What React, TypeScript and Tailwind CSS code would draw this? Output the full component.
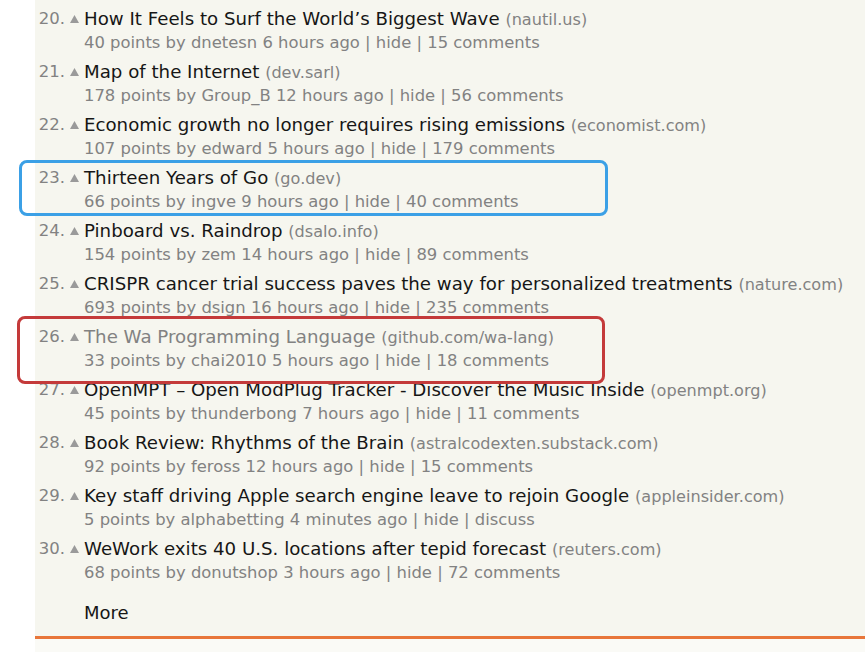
import React from "react";

const STORIES = [
  { rank: 20, title: "How It Feels to Surf the World’s Biggest Wave", site: "nautil.us", points: 40, user: "dnetesn", age: "6 hours ago", comments: "15 comments" },
  { rank: 21, title: "Map of the Internet", site: "dev.sarl", points: 178, user: "Group_B", age: "12 hours ago", comments: "56 comments" },
  { rank: 22, title: "Economic growth no longer requires rising emissions", site: "economist.com", points: 107, user: "edward", age: "5 hours ago", comments: "179 comments" },
  { rank: 23, title: "Thirteen Years of Go", site: "go.dev", points: 66, user: "ingve", age: "9 hours ago", comments: "40 comments" },
  { rank: 24, title: "Pinboard vs. Raindrop", site: "dsalo.info", points: 154, user: "zem", age: "14 hours ago", comments: "89 comments" },
  { rank: 25, title: "CRISPR cancer trial success paves the way for personalized treatments", site: "nature.com", points: 693, user: "dsign", age: "16 hours ago", comments: "235 comments" },
  { rank: 26, title: "The Wa Programming Language", site: "github.com/wa-lang", points: 33, user: "chai2010", age: "5 hours ago", comments: "18 comments", visited: true },
  { rank: 27, title: "OpenMPT – Open ModPlug Tracker - Discover the Music Inside", site: "openmpt.org", points: 45, user: "thunderbong", age: "7 hours ago", comments: "11 comments" },
  { rank: 28, title: "Book Review: Rhythms of the Brain", site: "astralcodexten.substack.com", points: 92, user: "feross", age: "12 hours ago", comments: "15 comments" },
  { rank: 29, title: "Key staff driving Apple search engine leave to rejoin Google", site: "appleinsider.com", points: 5, user: "alphabetting", age: "4 minutes ago", comments: "discuss" },
  { rank: 30, title: "WeWork exits 40 U.S. locations after tepid forecast", site: "reuters.com", points: 68, user: "donutshop", age: "3 hours ago", comments: "72 comments" },
];

export default function App() {
  return (
    <div className="w-[865px] h-[652px] overflow-hidden bg-white flex font-['DejaVu_Sans',Verdana,sans-serif]">
      <div className="w-[35px] shrink-0 bg-white" />
      <div className="flex-1 flex flex-col bg-[#f6f6ef] relative">
        {/* story list */}
        <div className="flex flex-col">
          {STORIES.map((s) => (
            <div key={s.rank} className="h-[53px] pt-[7px] flex">
              <div className="w-[30px] text-right text-[16.5px] leading-[23px] text-[#828282] whitespace-nowrap">{s.rank}.</div>
              <div className="w-[19px] flex justify-center pt-[8px]">
                <svg width="9" height="8" viewBox="0 0 9 8">
                  <polygon points="4.5,0 9,8 0,8" fill="#9a9a9a" />
                </svg>
              </div>
              <div className="flex flex-col">
                <div className="text-[18.2px] leading-[23px] whitespace-nowrap">
                  <span className={s.visited ? "text-[#828282]" : "text-[#161616]"}>{s.title}</span>{" "}
                  <span className="text-[16.1px] text-[#828282]">({s.site})</span>
                </div>
                <div className="text-[16.4px] leading-[23px] text-[#828282] whitespace-nowrap">
                  {s.points} points by {s.user} {s.age} | hide | {s.comments}
                </div>
              </div>
            </div>
          ))}
        </div>

        <div className="mt-[18px] pl-[49px] text-[18px] leading-[23px] text-[#161616]">More</div>

        <div className="mt-[12px] h-[3px] bg-[#e8763a]" />
        <div className="flex-1 bg-[#fafaf6]" />

        {/* annotation boxes */}
        <div className="absolute left-[-16px] top-[160px] w-[589px] h-[56px] rounded-[8px] border-[3px] border-[#3ba0e6]" />
        <div className="absolute left-[-18px] top-[316px] w-[588px] h-[68px] rounded-[8px] border-[3px] border-[#c43a3a]" />
      </div>
    </div>
  );
}
